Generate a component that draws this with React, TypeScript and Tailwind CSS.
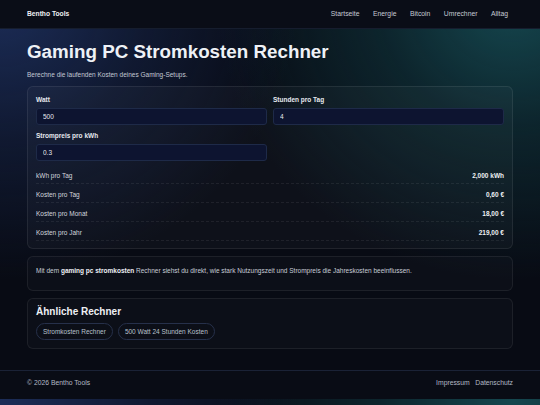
import React from 'react';

const nav = ['Startseite', 'Energie', 'Bitcoin', 'Umrechner', 'Alltag'];

const results = [
  { label: 'kWh pro Tag', value: '2,000 kWh' },
  { label: 'Kosten pro Tag', value: '0,60 €' },
  { label: 'Kosten pro Monat', value: '18,00 €' },
  { label: 'Kosten pro Jahr', value: '219,00 €' },
];

const related = ['Stromkosten Rechner', '500 Watt 24 Stunden Kosten'];

function Field({ label, value }: { label: string; value: string }) {
  return (
    <label className="flex flex-col gap-[4px]">
      <span className="text-[6.5px] leading-[9px] font-bold text-[#e6e9ef]">{label}</span>
      <input
        defaultValue={value}
        className="h-[17px] w-full rounded-[3px] border border-[#1e2a48] bg-[#0d1430] px-[6px] text-[6.5px] text-[#e6e9ef] outline-none"
      />
    </label>
  );
}

export default function App() {
  return (
    <div className="min-h-screen bg-[#080b14] bg-[radial-gradient(55%_70%_at_0%_0%,#1c2d58_0%,#17254a88_50%,transparent_100%),radial-gradient(55%_70%_at_95%_0%,#15474f_0%,#10363d99_45%,transparent_100%)] bg-[length:100%_399px] bg-repeat-y font-['Liberation_Sans',Arial,sans-serif] text-[#e6e9ef]">
      <header className="h-[29px] border-b border-[#161d2e] bg-[#0a0d17]">
        <div className="mx-[27px] flex h-full items-center justify-between">
          <span className="text-[6.7px] font-bold text-[#eef0f4]">Bentho Tools</span>
          <nav className="mr-[5px] flex gap-[13.5px] text-[6.8px] text-[#c5cad5]">
            {nav.map((n) => (
              <a key={n}>{n}</a>
            ))}
          </nav>
        </div>
      </header>

      <main className="mx-[27px] pt-[11px] pb-[21px]">
        <h1 className="text-[18.8px] leading-[23px] font-bold text-[#eef1f6]">Gaming PC Stromkosten Rechner</h1>
        <p className="mt-[6.5px] text-[6.5px] leading-[10px] text-[#c3c9d4]">
          Berechne die laufenden Kosten deines Gaming-Setups.
        </p>

        <section className="mt-[6.5px] rounded-[6px] border border-[#ffffff14] bg-[#ffffff07] px-[8px] pt-[8px] pb-[7px]">
          <div className="grid grid-cols-2 gap-x-[6px] gap-y-[6px]">
            <Field label="Watt" value="500" />
            <Field label="Stunden pro Tag" value="4" />
            <Field label="Strompreis pro kWh" value="0.3" />
          </div>
          <div className="mt-[9.5px] flex flex-col gap-[6.3px]">
            {results.map((r) => (
              <div
                key={r.label}
                className="flex items-center justify-between border-b border-dashed border-[#ffffff12] pb-[3px] text-[6.5px] leading-[9px]"
              >
                <span className="text-[#d2d6de]">{r.label}</span>
                <span className="font-bold text-[#eef0f4]">{r.value}</span>
              </div>
            ))}
          </div>
        </section>

        <section className="mt-[7px] rounded-[6px] border border-[#ffffff12] bg-[#ffffff05] px-[8px] pt-[9px] pb-[14px]">
          <p className="text-[6.5px] leading-[10px] text-[#c8cdd7]">
            Mit dem <strong className="font-bold text-[#eef0f4]">gaming pc stromkosten</strong> Rechner siehst du direkt,
            wie stark Nutzungszeit und Strompreis die Jahreskosten beeinflussen.
          </p>
        </section>

        <section className="mt-[7px] rounded-[6px] border border-[#ffffff12] bg-[#ffffff05] px-[8px] pt-[7px] pb-[8px]">
          <h2 className="text-[10px] leading-[12px] font-bold text-[#eef0f4]">Ähnliche Rechner</h2>
          <div className="mt-[5px] flex gap-[5px]">
            {related.map((r) => (
              <a
                key={r}
                className="flex h-[17px] items-center rounded-full border border-[#26304a] px-[6px] text-[6.5px] text-[#b9c0cc]"
              >
                {r}
              </a>
            ))}
          </div>
        </section>
      </main>

      <footer className="border-t border-[#1a2236] bg-[#090c15]">
        <div className="mx-[27px] flex items-center justify-between pt-[7px] pb-[11px] text-[6.8px] leading-[10px] text-[#b3b9c5]">
          <span>© 2026 Bentho Tools</span>
          <div className="flex gap-[5.5px]">
            <a>Impressum</a>
            <a>Datenschutz</a>
          </div>
        </div>
      </footer>
    </div>
  );
}
